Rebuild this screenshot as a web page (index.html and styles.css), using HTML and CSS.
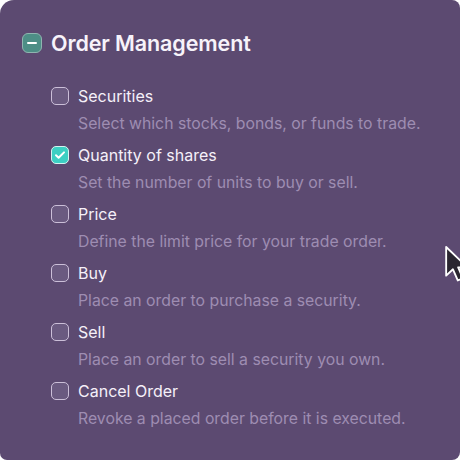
FILE: index.html
```html
<!DOCTYPE html>
<html>
<head>
<meta charset="utf-8">
<link rel="stylesheet" href="styles.css">
</head>
<body>
<div class="card">
  <div class="header">
    <span class="box box-indeterminate"><span class="dash"></span></span>
    <h1 class="title">Order Management</h1>
  </div>
  <ul class="items">
    <li class="item">
      <span class="box"></span>
      <div class="text">
        <div class="label">Securities</div>
        <div class="desc">Select which stocks, bonds, or funds to trade.</div>
      </div>
    </li>
    <li class="item">
      <span class="box box-checked">
        <svg viewBox="0 0 18 18" width="18" height="18"><path d="M5 9.3l2.6 2.5L13 6.4" fill="none" stroke="#fff" stroke-width="2" stroke-linecap="round" stroke-linejoin="round"/></svg>
      </span>
      <div class="text">
        <div class="label">Quantity of shares</div>
        <div class="desc">Set the number of units to buy or sell.</div>
      </div>
    </li>
    <li class="item">
      <span class="box"></span>
      <div class="text">
        <div class="label">Price</div>
        <div class="desc">Define the limit price for your trade order.</div>
      </div>
    </li>
    <li class="item">
      <span class="box"></span>
      <div class="text">
        <div class="label">Buy</div>
        <div class="desc">Place an order to purchase a security.</div>
      </div>
    </li>
    <li class="item">
      <span class="box"></span>
      <div class="text">
        <div class="label">Sell</div>
        <div class="desc">Place an order to sell a security you own.</div>
      </div>
    </li>
    <li class="item">
      <span class="box"></span>
      <div class="text">
        <div class="label">Cancel Order</div>
        <div class="desc">Revoke a placed order before it is executed.</div>
      </div>
    </li>
  </ul>
  <svg class="cursor" viewBox="0 0 20 30" width="27" height="40"><path d="M1.5 1.5 L1.5 23 L6.6 18.2 L10.2 26.6 L14 25 L10.5 16.8 L17.5 16.8 Z" fill="#2a2630" stroke="#fff" stroke-width="1.4" stroke-linejoin="round"/></svg>
</div>
</body>
</html>
```
FILE: styles.css
```css
html, body {
  margin: 0;
  padding: 0;
  background: #ffffff;
}
body {
  width: 460px;
  height: 460px;
  overflow: hidden;
  font-family: Inter, "Noto Sans", sans-serif;
}
.card {
  position: relative;
  box-sizing: border-box;
  width: 460px;
  height: 460px;
  background: #5c4a71;
  border-radius: 14px 8px 8px 7px;
  padding: 32px 0 0 22px;
  overflow: hidden;
}
.header {
  display: flex;
  align-items: center;
  gap: 9px;
  height: 22px;
}
.title {
  margin: 0;
  font-size: 21.5px;
  font-weight: 600;
  color: #f7f3fa;
  letter-spacing: -0.1px;
}
.box {
  box-sizing: border-box;
  flex: none;
  width: 18px;
  height: 18px;
  border-radius: 5px;
  border: 1.5px solid #cbbfd8;
  background: #6a5a80;
  display: flex;
  align-items: center;
  justify-content: center;
}
.box-indeterminate {
  width: 20px;
  height: 20px;
  border-radius: 6px;
  background: #4d8e86;
  border: 1.5px solid #8fb5b0;
}
.dash {
  width: 10px;
  height: 2px;
  border-radius: 1px;
  background: #ffffff;
}
.box-checked {
  background: #3ccfc3;
  border: 1.5px solid #d5f3f0;
}
.box-checked svg {
  display: block;
  margin: -1.5px;
}
.items {
  list-style: none;
  margin: 0;
  padding: 31px 0 0 29px;
  display: flex;
  flex-direction: column;
  gap: 8px;
}
.item {
  display: flex;
  align-items: flex-start;
  gap: 9px;
  height: 51px;
}
.item .box {
  margin-top: 2px;
}
.label {
  font-size: 16px;
  line-height: 22px;
  color: #f5f0f9;
}
.desc {
  margin-top: 6px;
  font-size: 15.8px;
  line-height: 22px;
  color: #9e8db2;
}
.cursor {
  position: absolute;
  left: 444px;
  top: 245px;
}
```
